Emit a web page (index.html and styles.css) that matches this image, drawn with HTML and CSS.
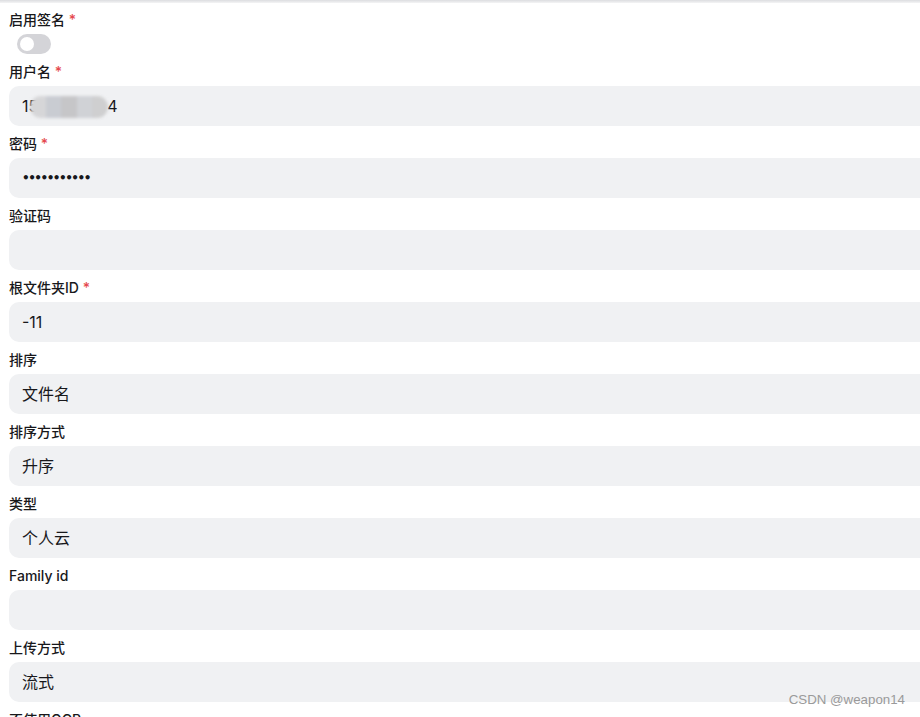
FILE: index.html
```
<!DOCTYPE html>
<html lang="zh-CN">
<head>
    <meta charset="UTF-8">
    <meta name="viewport" content="width=device-width, initial-scale=1.0">
    <link rel="stylesheet" href="styles.css">
</head>
<body>
    <div class="topbar"></div>
    <form class="form">
        <div class="item">
            <label class="label">启用签名 <span class="req">*</span></label>
            <div class="switch"><span class="knob"></span></div>
        </div>
        <div class="item">
            <label class="label">用户名 <span class="req">*</span></label>
            <div class="box">15<span class="mosaic"></span>4</div>
        </div>
        <div class="item">
            <label class="label">密码 <span class="req">*</span></label>
            <div class="box dots">•••••••••••</div>
        </div>
        <div class="item">
            <label class="label">验证码</label>
            <div class="box"></div>
        </div>
        <div class="item">
            <label class="label">根文件夹ID <span class="req">*</span></label>
            <div class="box">-11</div>
        </div>
        <div class="item">
            <label class="label">排序</label>
            <div class="box">文件名</div>
        </div>
        <div class="item">
            <label class="label">排序方式</label>
            <div class="box">升序</div>
        </div>
        <div class="item">
            <label class="label">类型</label>
            <div class="box">个人云</div>
        </div>
        <div class="item">
            <label class="label">Family id</label>
            <div class="box"></div>
        </div>
        <div class="item">
            <label class="label">上传方式</label>
            <div class="box">流式</div>
        </div>
        <div class="item">
            <label class="label">不使用OCR</label>
            <div class="switch"><span class="knob"></span></div>
        </div>
    </form>
    <div class="watermark">CSDN @weapon14</div>
</body>
</html>
```

FILE: styles.css
```
html, body {
    margin: 0;
    padding: 0;
    height: 100%;
    overflow: hidden;
}
body {
    font-family: Inter, "Noto Sans CJK SC", sans-serif;
    color: #1f2329;
    background: #fff;
    position: relative;
}
.topbar {
    height: 3px;
    background: linear-gradient(#dcdde0, #f4f4f5);
}
.form {
    padding: 6px 0 0 9px;
    width: 940px;
}
.item {
    padding-bottom: 7px;
}
.label {
    display: block;
    height: 20px;
    line-height: 22px;
    font-size: 14px;
    font-weight: 500;
    margin-bottom: 5px;
    color: #18181b;
}
.req {
    color: #e5484d;
}
.switch {
    width: 34px;
    height: 20px;
    margin-left: 8px;
    border-radius: 10px;
    background: #d4d4d8;
    position: relative;
}
.knob {
    position: absolute;
    left: 3px;
    top: 3px;
    width: 14px;
    height: 14px;
    border-radius: 50%;
    background: #fff;
}
.box {
    height: 40px;
    line-height: 40px;
    border-radius: 10px;
    background: #f0f1f3;
    padding-left: 13px;
    font-size: 16px;
    color: #18181b;
}
.dots {
    font-size: 12px;
    letter-spacing: -1.5px;
    font-family: "DejaVu Sans", sans-serif;
    font-weight: bold;
}
.mosaic {
    display: inline-block;
    vertical-align: middle;
    width: 78px;
    height: 22px;
    margin: 0 -1px 2px -8px;
    border-radius: 11px;
    background: linear-gradient(90deg, #d6d6d8 0 20%, #c9ccd2 20% 40%, #c6c6c8 40% 60%, #d0d2d6 60% 80%, #cfcfd0 80%);
    filter: blur(1.5px);
}
.watermark {
    position: absolute;
    right: 15px;
    bottom: 10px;
    font-family: "Liberation Sans", Arial, sans-serif;
    font-size: 13.3px;
    color: #9a9a9a;
}
```
